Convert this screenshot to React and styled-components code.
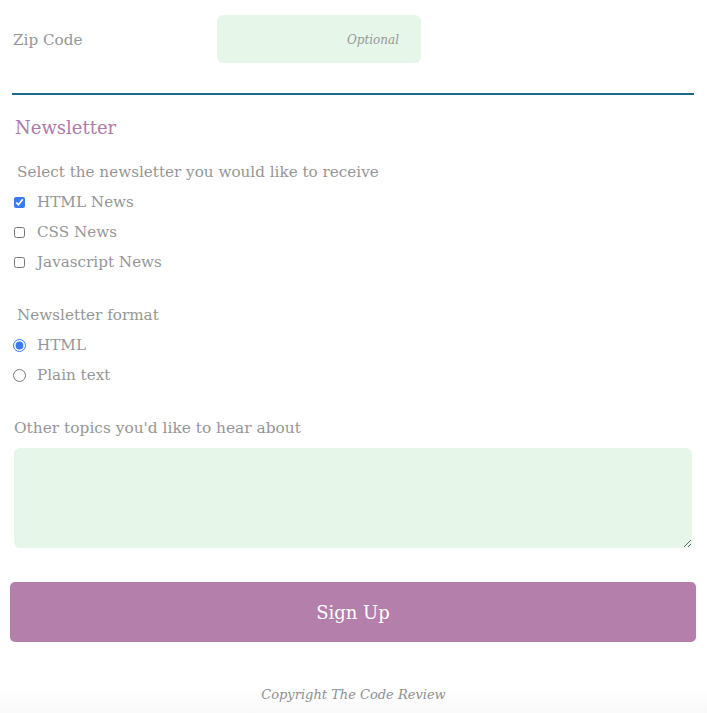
import React from "react";
import styled, { createGlobalStyle } from "styled-components";

const Global = createGlobalStyle`
  html, body { margin: 0; padding: 0; background: #fff; }
  body { font-family: "DejaVu Serif", "Liberation Serif", serif; color: #969696; }
  * { box-sizing: border-box; }
`;

const Page = styled.div`
  display: flex;
  flex-direction: column;
  min-height: 713px;
  padding: 0 13px 0 12px;
`;

const ZipRow = styled.div`
  display: flex;
  align-items: center;
  margin-top: 15px;
  height: 48px;
`;

const ZipLabel = styled.label`
  width: 205px;
  padding-left: 1px;
  padding-top: 2px;
  font-size: 15.2px;
  color: #969696;
`;

const TextInput = styled.input`
  width: 204px;
  height: 48px;
  border: none;
  border-radius: 6px;
  background: #e6f6e9;
  text-align: right;
  padding: 2px 22px 0 12px;
  font-family: inherit;
  font-size: 12px;
  outline: none;
  &::placeholder {
    color: #969696;
    font-style: italic;
  }
`;

const Divider = styled.hr`
  margin: 30px 0 0;
  border: none;
  height: 2px;
  background: #1b6a8c;
`;

const Heading = styled.h2`
  margin: 19px 0 0 3px;
  font-size: 18px;
  font-weight: normal;
  line-height: 28px;
  color: #b07aa8;
`;

const Fieldset = styled.fieldset`
  border: none;
  margin: ${(p) => p.$top}px 0 0;
  padding: 0;
  display: flex;
  flex-direction: column;
`;

const Legend = styled.div`
  margin-left: 5px;
  font-size: 15.2px;
  line-height: 30px;
  height: 30px;
`;

const Option = styled.label`
  display: flex;
  align-items: center;
  height: 30px;
  font-size: 15.2px;
  color: #969696;
  input {
    accent-color: #3b79f5;
    margin: 0 12px 0 2px;
    width: 11px;
    height: 11px;
  }
`;

const RadioOption = styled(Option)`
  input {
    width: 13px;
    height: 13px;
    margin: 0 11px 0 1px;
  }
`;

const TopicsLabel = styled.label`
  display: block;
  margin: 23px 0 0 2px;
  font-size: 15.4px;
  line-height: 30px;
`;

const TextArea = styled.textarea`
  display: block;
  margin: 5px 2px 0;
  width: calc(100% - 4px);
  height: 100px;
  border: none;
  border-radius: 6px;
  background: #e6f6e9;
  outline: none;
  font-family: inherit;
  padding: 8px;
`;

const Button = styled.button`
  margin: 34px -2px 0;
  height: 60px;
  border: none;
  border-radius: 5px;
  background: #b47faa;
  color: #fff;
  font-family: inherit;
  font-size: 18px;
  cursor: pointer;
`;

const Footer = styled.footer`
  margin: 33px -13px 0 -12px;
  flex: 1;
  display: flex;
  justify-content: center;
  padding-top: 12px;
  background: linear-gradient(to bottom, #ffffff 0%, #ffffff 35%, #f9f9f9 100%);
  font-style: italic;
  font-size: 13px;
  color: #8f8f8f;
`;

export default function App() {
  return (
    <>
      <Global />
      <Page>
        <ZipRow>
          <ZipLabel htmlFor="zip">Zip Code</ZipLabel>
          <TextInput id="zip" placeholder="Optional" />
        </ZipRow>
        <Divider />
        <Heading>Newsletter</Heading>
        <Fieldset $top={15}>
          <Legend>Select the newsletter you would like to receive</Legend>
          <Option>
            <input type="checkbox" defaultChecked />
            HTML News
          </Option>
          <Option>
            <input type="checkbox" />
            CSS News
          </Option>
          <Option>
            <input type="checkbox" />
            Javascript News
          </Option>
        </Fieldset>
        <Fieldset $top={23}>
          <Legend>Newsletter format</Legend>
          <RadioOption>
            <input type="radio" name="fmt" defaultChecked />
            HTML
          </RadioOption>
          <RadioOption>
            <input type="radio" name="fmt" />
            Plain text
          </RadioOption>
        </Fieldset>
        <TopicsLabel htmlFor="topics">Other topics you'd like to hear about</TopicsLabel>
        <TextArea id="topics" />
        <Button type="button">Sign Up</Button>
        <Footer>Copyright The Code Review</Footer>
      </Page>
    </>
  );
}
